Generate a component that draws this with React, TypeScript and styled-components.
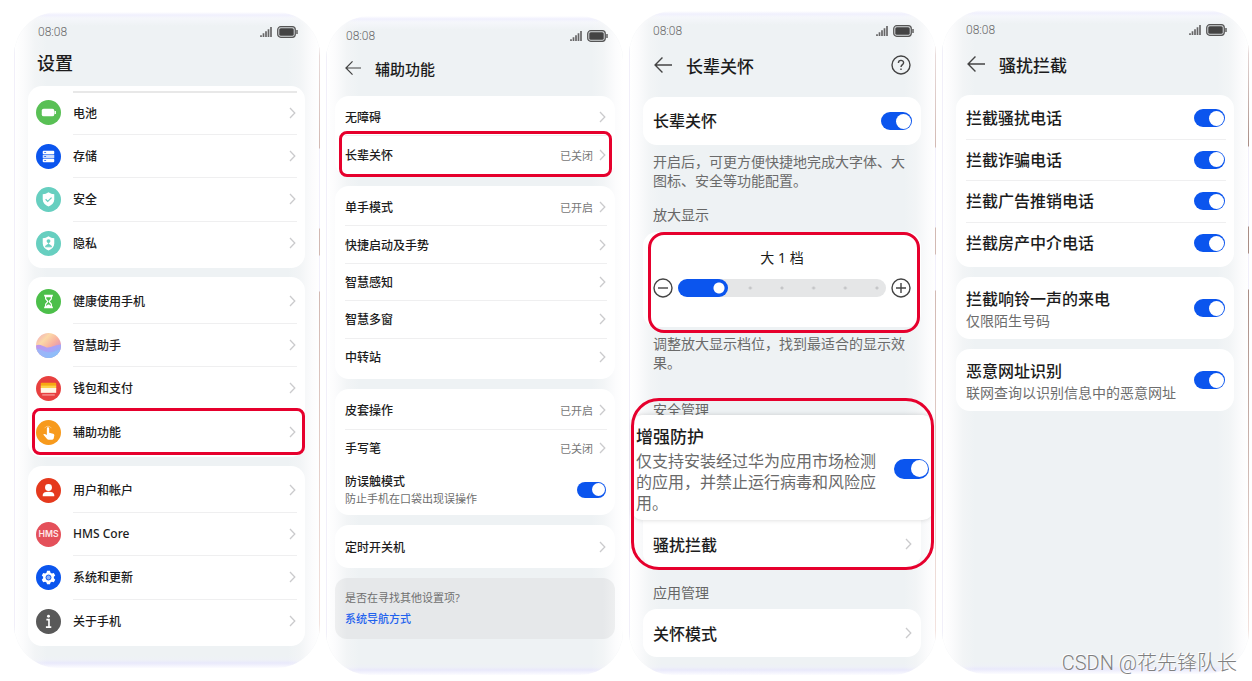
import React, { useState } from 'react';
import styled, { createGlobalStyle, css } from 'styled-components';

const BLUE = '#0b55ee';
const RED = '#e6002d';

const GlobalStyle = createGlobalStyle`
  *, *::before, *::after { box-sizing: border-box; }
  body {
    margin: 0;
    background: #fff;
    color: #1c1c1c;
    font-family: "Noto Sans", "Noto Sans CJK SC", sans-serif;
  }
  button {
    padding: 0;
    border: 0;
    background: none;
    color: inherit;
    font: inherit;
    text-align: left;
    cursor: pointer;
  }
  ul { margin: 0; padding: 0; list-style: none; }
  h1, h2, p { margin: 0; }
`;

const Page = styled.main`
  position: relative;
  display: grid;
  grid-template-columns: 306fr 297fr 307fr 307fr;
  gap: 6px;
  align-items: start;
  padding: 10px 3px 4px 14px;
`;

const Phone = styled.section<{
  $drop: number;
  $left: number;
  $right: number;
  $end: number;
  $keys?: string;
}>`
  position: relative;
  margin-top: ${(p) => p.$drop}px;
  padding: 10px ${(p) => p.$right}px ${(p) => p.$end}px ${(p) => p.$left}px;
  border-radius: 44px;
  overflow: hidden;
  background:
    linear-gradient(#fff 0, #f0f0fd 3px, rgba(246, 247, 252, 0.9) 6px, rgba(240, 243, 246, 0) 14px),
    linear-gradient(to top, #fcfcff 0, #e9e9fb 5px, rgba(238, 240, 248, 0.6) 8px, rgba(238, 242, 244, 0) 12px),
    #eef2f4;

  &::before {
    content: '';
    position: absolute;
    inset: 0;
    border-left: 1px solid #f1eff9;
    background: linear-gradient(
      to right,
      #fff 0,
      rgba(252, 252, 253, 0.95) 8px,
      rgba(246, 247, 248, 0.5) 20px,
      rgba(238, 242, 244, 0) 32px,
      rgba(238, 242, 244, 0) calc(100% - 32px),
      rgba(246, 247, 248, 0.5) calc(100% - 20px),
      rgba(252, 252, 253, 0.95) calc(100% - 8px),
      #fff 100%
    );
    pointer-events: none;
  }

  > * { position: relative; }

  ${(p) => p.$keys && css`
    &::after {
      content: '';
      position: absolute;
      top: 34px;
      right: 0;
      bottom: 34px;
      width: 1px;
      background: linear-gradient(
        #eadede 0,
        ${p.$keys} 102px,
        #f1effa 103px,
        #f1effa 182px,
        ${p.$keys} 183px,
        ${p.$keys} 209px,
        #f1effa 210px,
        #f1effa 245px,
        ${p.$keys} 246px,
        #f4e4e0 100%
      );
    }
  `}
`;

const Status = styled.div<{ $inset: number }>`
  display: flex;
  align-items: center;
  gap: 5px;
  height: 20px;
  padding: 0 7px 0 ${(p) => p.$inset}px;
  color: #4c4c4c;
`;

const Clock = styled.time`
  flex: 1;
  color: #6a6a6a;
  font: 300 12px/20px Roboto, sans-serif;
`;

const Header = styled.header<{ $height: number; $below: number; $inset: number }>`
  display: flex;
  align-items: center;
  gap: 14px;
  height: ${(p) => p.$height}px;
  padding: 0 10px ${(p) => p.$below}px ${(p) => p.$inset}px;
`;

const Title = styled.h1<{ $size: number }>`
  flex: 1;
  font-size: ${(p) => p.$size}px;
  font-weight: 500;
`;

const IconButton = styled.button`
  display: flex;
  flex: none;
  color: #444;
`;

const Stack = styled.div<{ $gap: number }>`
  display: flex;
  flex-direction: column;
  gap: ${(p) => p.$gap}px;
`;

const Card = styled.div`
  padding: 3px 0;
  border-radius: 14px;
  background: #fff;
`;

const List = styled.ul<{ $height: number; $lead?: boolean }>`
  display: grid;
  grid-auto-rows: 1fr;
  min-height: ${(p) => p.$height}px;
  ${(p) => p.$lead && css`
    margin-top: 2px;
    > li:first-child > * > :last-child { border-top: 2px solid #e8e8e8; }
  `}
  > li:not(:last-child) > * > :last-child { border-bottom: 1px solid #efeff0; }
`;

const outline = css<{ $inset: string; $radius: number }>`
  position: relative;
  &::after {
    content: '';
    position: absolute;
    z-index: 2;
    inset: ${(p) => p.$inset};
    border: 3px solid ${RED};
    border-radius: ${(p) => p.$radius}px;
    pointer-events: none;
  }
`;

const Item = styled.li``;
const MarkedItem = styled.li<{ $inset: string; $radius: number }>`${outline}`;

const rowBox = css<{ $tall?: number }>`
  display: flex;
  gap: 12px;
  width: 100%;
  height: 100%;
  min-height: ${(p) => p.$tall ?? 0}px;
  padding: 0 8px;
`;
const RowButton = styled.button`${rowBox}`;
const RowLabel = styled.label<{ $tall?: number }>`${rowBox}`;

const Badge = styled.svg`
  flex: none;
  align-self: center;
  width: 25px;
  height: 25px;
`;

const RowBody = styled.span<{ $indent?: number }>`
  display: flex;
  flex: 1;
  align-items: center;
  gap: 6px;
  min-width: 0;
  margin-left: ${(p) => p.$indent ?? 0}px;
  padding-right: 1px;
`;

const Name = styled.span<{ $size: number }>`
  display: block;
  flex: 1;
  font-size: ${(p) => p.$size}px;
  font-weight: 500;
`;

const Value = styled.span`
  color: #777;
  font-size: 11px;
`;

const Texts = styled.span`
  flex: 1;
  min-width: 0;
`;

const Sub = styled.span<{ $size: number }>`
  display: block;
  color: #6d6d6d;
  font-size: ${(p) => p.$size}px;
  line-height: ${(p) => p.$size + 5}px;
`;

const Head = styled.span<{ $size: number; $line: number }>`
  display: block;
  font-size: ${(p) => p.$size}px;
  line-height: ${(p) => p.$line}px;
  font-weight: 500;
`;

const Switch = styled.input<{ $w: number; $h: number }>`
  appearance: none;
  flex: none;
  display: flex;
  align-items: center;
  width: ${(p) => p.$w}px;
  height: ${(p) => p.$h}px;
  margin: 0;
  padding: 0 1px;
  border-radius: ${(p) => p.$h}px;
  background: #cfd2d6;
  cursor: pointer;
  &::before {
    content: '';
    width: ${(p) => p.$h - 3}px;
    height: ${(p) => p.$h - 3}px;
    border-radius: 50%;
    background: #fff;
  }
  &:checked { background: ${BLUE}; justify-content: flex-end; }
`;

const Finder = styled.aside`
  padding: 10px;
  border-radius: 12px;
  background: linear-gradient(to right, #eeeff0 0, #e6e8ea 12px, #e6e8ea calc(100% - 12px), #eeeff0 100%);
  color: #707070;
  font-size: 11px;
  line-height: 20px;
`;

const FinderLink = styled.a`
  display: block;
  margin-top: 1px;
  color: #1f62ee;
  font-weight: 500;
  text-decoration: none;
`;

const Note = styled.p<{ $height: number }>`
  height: ${(p) => p.$height}px;
  padding: 7px 10px 0;
  color: #6b6b6b;
  font-size: 14px;
  line-height: 19px;
`;

const SectionName = styled.h2<{ $height: number; $above?: number }>`
  height: ${(p) => p.$height}px;
  margin-top: ${(p) => p.$above ?? 0}px;
  padding: 0 10px;
  color: #666;
  font-size: 14px;
  font-weight: 400;
  line-height: 20px;
`;

const ZoomCard = styled.div<{ $inset: string; $radius: number }>`
  height: 95px;
  padding: 15px 10px;
  border-radius: 14px;
  background: #fff;
  ${outline}
`;

const ZoomLevel = styled.output`
  display: block;
  margin-bottom: 9px;
  font-size: 14px;
  line-height: 22px;
  text-align: center;
`;

const ZoomRow = styled.div`
  display: flex;
  align-items: center;
  gap: 5px;
`;

const Range = styled.input`
  appearance: none;
  flex: 1;
  min-width: 0;
  height: 18px;
  margin: 0;
  border-radius: 9px;
  background:
    linear-gradient(${BLUE}, ${BLUE}) 0 0 / var(--filled) 100% no-repeat,
    radial-gradient(circle at 2px 50%, #c4c5c7 1px, transparent 2px) 7px 0 / calc((100% - 18px) / 6) 100% repeat-x,
    #e5e6e7;
  &::-webkit-slider-thumb {
    appearance: none;
    width: 18px;
    height: 18px;
    border-radius: 50%;
    background: radial-gradient(circle, #fff 5px, ${BLUE} 6px);
  }
`;

const GuardGroup = styled.div<{ $inset: string; $radius: number }>`${outline}`;

const GuardPanel = styled.label`
  position: relative;
  display: flex;
  align-items: center;
  gap: 14px;
  min-height: 105px;
  margin: 0 -12px 0 -11px;
  padding: 2px 4px 0;
  border-radius: 10px;
  background: #fff;
  box-shadow: 0 0 5px rgba(0, 0, 0, 0.16);
`;

const GuardText = styled.span`
  display: block;
  max-width: 240px;
  color: #6a6a6a;
  font-size: 16px;
  line-height: 21px;
`;

const FlatCard = styled.div`
  height: 47px;
  border-radius: 0 0 14px 14px;
  background: #fff;
`;

const SoloCard = styled.div`
  height: 48px;
  border-radius: 14px;
  background: #fff;
`;

const Watermark = styled.p`
  position: absolute;
  right: 15px;
  bottom: 2px;
  color: #808080;
  font: 300 20px/28px Roboto, "Noto Sans CJK SC", sans-serif;
  text-shadow: -1px -1px 0 #fff;
`;

function Signal() {
  return (
    <svg width="12" height="12" viewBox="0 0 12 12" fill="none" stroke="#666" aria-hidden="true">
      <path d="M1 9.200V11M3.500 7.300V11M6 5.300V11M8.500 3.200V11M11 1V11" strokeWidth="1.700" />
    </svg>
  );
}

function Battery() {
  return (
    <svg width="21" height="12" viewBox="0 0 21 12" aria-hidden="true">
      <rect x=".7" y=".7" width="17.600" height="10.600" rx="3" fill="#d5d8da" stroke="#555" strokeWidth="1.200" />
      <rect x="2.300" y="2.300" width="14.400" height="7.400" rx="1.500" fill="#444" />
      <path d="M20 4v4" stroke="#555" strokeWidth="1.400" />
    </svg>
  );
}

function StatusBar({ inset }: { inset: number }) {
  return (
    <Status $inset={inset}>
      <Clock>08:08</Clock>
      <Signal />
      <Battery />
    </Status>
  );
}

function BackButton({ size }: { size: number }) {
  return (
    <IconButton aria-label="返回">
      <svg width={size} height={size} viewBox="0 0 17 17" fill="none" stroke="currentColor" strokeWidth="1.300">
        <path d="M8 1.500 1 8.500l7 7M1 8.500h16" />
      </svg>
    </IconButton>
  );
}

function Chevron() {
  return (
    <svg width="7" height="12" viewBox="0 0 7 12" fill="none" stroke="#cbcbcd" strokeWidth="1.300" aria-hidden="true">
      <path d="M1 1l4.800 5L1 11" />
    </svg>
  );
}

const badges: Record<string, React.ReactNode> = {
  battery: (
    <>
      <circle cx="13" cy="13" r="13" fill="#59c055" />
      <rect x="6" y="9" width="13" height="8" rx="2" fill="#fff" />
      <path d="M20 11.500v3" stroke="#fff" strokeWidth="1.500" />
    </>
  ),
  storage: (
    <>
      <circle cx="13" cy="13" r="13" fill="#0b55ee" />
      <rect x="7" y="7" width="12" height="3.600" rx="1" fill="#fff" />
      <rect x="7" y="11.200" width="12" height="3.600" fill="#cfdefc" />
      <rect x="7" y="15.400" width="12" height="3.600" rx="1" fill="#fff" />
      <path d="M8.500 8.800h2M8.500 13h2M8.500 17.200h2" stroke="#0b55ee" strokeWidth=".8" />
    </>
  ),
  security: (
    <>
      <circle cx="13" cy="13" r="13" fill="#67cfc0" />
      <path d="M13 5.500c2 1.400 3.600 1.900 6 2.100V13c0 3.500-2.500 5.900-6 7.200C9.500 18.900 7 16.500 7 13V7.600c2.400-.2 4-.7 6-2.100z" fill="#fff" />
      <path d="M10 12.800l2.200 2.200 4-4" fill="none" stroke="#67cfc0" strokeWidth="1.300" />
    </>
  ),
  privacy: (
    <>
      <circle cx="13" cy="13" r="13" fill="#67cfc0" />
      <path d="M13 5.500c2 1.400 3.600 1.900 6 2.100V13c0 3.500-2.500 5.900-6 7.200C9.500 18.900 7 16.500 7 13V7.600c2.400-.2 4-.7 6-2.100z" fill="#fff" />
      <circle cx="13" cy="10.500" r="2" fill="#67cfc0" />
      <path d="M13 12v3M9.800 16.500c.5-1.800 1.700-2.400 3.200-2.400s2.700.6 3.200 2.400z" fill="#67cfc0" stroke="#67cfc0" strokeWidth=".8" />
    </>
  ),
  health: (
    <>
      <circle cx="13" cy="13" r="13" fill="#4cbf4a" />
      <path d="M8.500 7h9M8.500 19h9" stroke="#fff" strokeWidth="1.800" />
      <path d="M10 8v1.500c0 2 2.200 2.300 2.200 3.500s-2.200 1.500-2.200 3.500V18h6v-1.500c0-2-2.200-2.300-2.200-3.500s2.200-1.500 2.200-3.500V8z" fill="none" stroke="#fff" strokeWidth="1.300" />
      <path d="M11 18c.3-1.500 1-2 2-2s1.700.5 2 2z" fill="#fff" />
    </>
  ),
  assistant: (
    <>
      <defs>
        <linearGradient id="dawn" x1="0" y1="0" x2="1" y2="1">
          <stop offset="0" stopColor="#f0a5c0" />
          <stop offset=".3" stopColor="#fbd9a8" />
          <stop offset=".55" stopColor="#f8b0a0" />
          <stop offset="1" stopColor="#b878e0" />
        </linearGradient>
        <linearGradient id="sea" x1="0" y1="0" x2="1" y2="1">
          <stop offset="0" stopColor="#c493ea" />
          <stop offset=".5" stopColor="#a9a4f8" />
          <stop offset="1" stopColor="#6fc4f5" />
        </linearGradient>
        <clipPath id="orb"><circle cx="13" cy="13" r="13" /></clipPath>
      </defs>
      <g clipPath="url(#orb)">
        <rect width="26" height="26" fill="url(#dawn)" />
        <path d="M0 13c4-2 7 1 11 2s9-3 15-3v14H0z" fill="url(#sea)" />
        <path d="M0 16c6 0 9 5 17 4l9-3v9H0z" fill="#8fc3fa" opacity=".6" />
      </g>
    </>
  ),
  wallet: (
    <>
      <circle cx="13" cy="13" r="13" fill="#e8403f" />
      <rect x="5" y="7" width="16" height="5" rx="1" fill="#f7a813" />
      <rect x="5" y="10" width="16" height="4" fill="#fcd34a" />
      <rect x="5" y="12.500" width="16" height="5" fill="#fff6e6" />
      <path d="M6.500 19.700h13" stroke="#f7a09c" strokeWidth="1.300" />
    </>
  ),
  access: (
    <>
      <circle cx="13" cy="13" r="13" fill="#f79a1c" />
      <path d="M9 8.500a4 4 0 0 1 7 0" fill="none" stroke="#fbc67d" strokeWidth="1" />
      <path d="M11.300 8.800c0-1.600 2.400-1.600 2.400 0v4.400l4 1c1 .3 1.500.9 1.300 1.900l-.6 3.200c-.2.800-.7 1.200-1.500 1.200h-3.800c-.7 0-1.200-.3-1.600-.8l-4-4.500c.6-1 1.800-1 3.800.4z" fill="#fff" />
    </>
  ),
  user: (
    <>
      <circle cx="13" cy="13" r="13" fill="#e5391d" />
      <circle cx="13" cy="9.800" r="3.600" fill="#fff" />
      <path d="M7 19v-1.200c0-2.400 2-3.600 6-3.600s6 1.200 6 3.600V19z" fill="#fff" />
    </>
  ),
  hms: (
    <>
      <circle cx="13" cy="13" r="13" fill="#e4505a" />
      <text x="13" y="16" textAnchor="middle" fill="#ffe9e9" fontFamily="Inter, sans-serif" fontWeight="600" fontSize="9">HMS</text>
    </>
  ),
  system: (
    <>
      <circle cx="13" cy="13" r="13" fill="#0b55ee" />
      <path d="M11.500 6h3l.6 2 1.400.8 2-.6 1.500 2.600-1.400 1.500v1.500l1.400 1.500-1.500 2.600-2-.6-1.400.8-.6 2h-3l-.6-2-1.400-.8-2 .6L6 15.300l1.400-1.500v-1.500L6 10.800l1.500-2.600 2 .6 1.400-.8z" fill="#fff" />
      <circle cx="13" cy="13" r="2.600" fill="#8fb2f8" stroke="#0b55ee" strokeWidth="1" />
    </>
  ),
  about: (
    <>
      <circle cx="13" cy="13" r="13" fill="#595959" />
      <circle cx="13" cy="7.500" r="1.500" fill="#fff" />
      <path d="M10.800 11h2.700v7.500M10.300 18.800h5.600" fill="none" stroke="#fff" strokeWidth="1.700" />
    </>
  ),
};

type Entry = { icon: string; name: string; marked?: boolean };

const settings: Entry[][] = [
  [
    { icon: 'battery', name: '电池' },
    { icon: 'storage', name: '存储' },
    { icon: 'security', name: '安全' },
    { icon: 'privacy', name: '隐私' },
  ],
  [
    { icon: 'health', name: '健康使用手机' },
    { icon: 'assistant', name: '智慧助手' },
    { icon: 'wallet', name: '钱包和支付' },
    { icon: 'access', name: '辅助功能', marked: true },
  ],
  [
    { icon: 'user', name: '用户和帐户' },
    { icon: 'hms', name: 'HMS Core' },
    { icon: 'system', name: '系统和更新' },
    { icon: 'about', name: '关于手机' },
  ],
];

function SettingRow({ icon, name }: Entry) {
  return (
    <RowButton>
      <Badge viewBox="0 0 26 26" aria-hidden="true">{badges[icon]}</Badge>
      <RowBody>
        <Name $size={12}>{name}</Name>
        <Chevron />
      </RowBody>
    </RowButton>
  );
}

function LinkRow({ name, value, size = 12 }: { name: string; value?: string; size?: number }) {
  return (
    <RowButton>
      <RowBody $indent={2}>
        <Name $size={size}>{name}</Name>
        {value && <Value>{value}</Value>}
        <Chevron />
      </RowBody>
    </RowButton>
  );
}

function SwitchRow({ name, note, tall }: { name: string; note?: string; tall?: number }) {
  return (
    <RowLabel $tall={tall}>
      <RowBody $indent={2}>
        <Texts>
          <Head $size={16} $line={24}>{name}</Head>
          {note && <Sub $size={14}>{note}</Sub>}
        </Texts>
        <Switch type="checkbox" defaultChecked $w={31} $h={18} />
      </RowBody>
    </RowLabel>
  );
}

function SettingsPhone() {
  return (
    <Phone $drop={2} $left={14} $right={15} $end={22} $keys="#d2b9b3">
      <StatusBar inset={10} />
      <Header $height={44} $below={4} $inset={9}>
        <Title $size={18}>设置</Title>
      </Header>
      <Stack $gap={9}>
        {settings.map((group, i) => (
          <Card key={i}>
            <List $height={174} $lead={i === 0}>
              {group.map((e) =>
                e.marked ? (
                  <MarkedItem key={e.name} $inset="-3px 0 -1px 4px" $radius={8}><SettingRow {...e} /></MarkedItem>
                ) : (
                  <Item key={e.name}><SettingRow {...e} /></Item>
                ),
              )}
            </List>
          </Card>
        ))}
      </Stack>
    </Phone>
  );
}

function AccessibilityPhone() {
  return (
    <Phone $drop={6} $left={9} $right={8} $end={36}>
      <StatusBar inset={11} />
      <Header $height={50} $below={6} $inset={10}>
        <BackButton size={16} />
        <Title $size={15}>辅助功能</Title>
      </Header>
      <Stack $gap={10}>
        <Card>
          <List $height={74}>
            <Item><LinkRow name="无障碍" /></Item>
            <MarkedItem $inset="-5px 3px -4px 4px" $radius={8}><LinkRow name="长辈关怀" value="已关闭" /></MarkedItem>
          </List>
        </Card>
        <Card>
          <List $height={187}>
            <Item><LinkRow name="单手模式" value="已开启" /></Item>
            <Item><LinkRow name="快捷启动及手势" /></Item>
            <Item><LinkRow name="智慧感知" /></Item>
            <Item><LinkRow name="智慧多窗" /></Item>
            <Item><LinkRow name="中转站" /></Item>
          </List>
        </Card>
        <Card>
          <List $height={75}>
            <Item><LinkRow name="皮套操作" value="已开启" /></Item>
            <Item><LinkRow name="手写笔" value="已关闭" /></Item>
          </List>
          <RowLabel $tall={45}>
            <RowBody $indent={2}>
              <Texts>
                <Head $size={12} $line={18}>防误触模式</Head>
                <Sub $size={11}>防止手机在口袋出现误操作</Sub>
              </Texts>
              <Switch type="checkbox" defaultChecked $w={29} $h={16} />
            </RowBody>
          </RowLabel>
        </Card>
        <Card>
          <List $height={37}>
            <Item><LinkRow name="定时开关机" /></Item>
          </List>
        </Card>
        <Finder>
          是否在寻找其他设置项?
          <FinderLink href="#navigation">系统导航方式</FinderLink>
        </Finder>
      </Stack>
    </Phone>
  );
}

function ElderCarePhone() {
  const [level, setLevel] = useState(1);
  return (
    <Phone $drop={1} $left={14} $right={15} $end={18} $keys="#d2b9b3">
      <StatusBar inset={10} />
      <Header $height={56} $below={8} $inset={11}>
        <BackButton size={18} />
        <Title $size={17}>长辈关怀</Title>
        <IconButton aria-label="帮助">
          <svg width="20" height="20" viewBox="0 0 20 20" fill="none" stroke="currentColor" strokeWidth="1.400">
            <circle cx="10" cy="10" r="9" />
            <path d="M7.400 8c0-3.600 5.200-3.400 5.200-.3 0 1.900-2.600 2-2.600 4.300M10 13.600v1.500" />
          </svg>
        </IconButton>
      </Header>
      <SoloCard><SwitchRow name="长辈关怀" /></SoloCard>
      <Note $height={60}>开启后，可更方便快捷地完成大字体、大图标、安全等功能配置。</Note>
      <SectionName $height={27}>放大显示</SectionName>
      <ZoomCard $inset="0 1px -6px 5px" $radius={16}>
        <ZoomLevel>大 {level} 档</ZoomLevel>
        <ZoomRow>
          <IconButton aria-label="缩小" onClick={() => setLevel(Math.max(0, level - 1))}>
            <svg width="20" height="20" viewBox="0 0 20 20" fill="none" stroke="currentColor" strokeWidth="1.400">
              <circle cx="10" cy="10" r="9" />
              <path d="M5 10h10" />
            </svg>
          </IconButton>
          <Range
            type="range"
            aria-label="放大显示"
            min={0}
            max={6}
            value={level}
            onChange={(e) => setLevel(Number(e.target.value))}
            style={{ '--filled': `calc(9px + (100% - 18px) * ${level} / 6)` } as React.CSSProperties}
          />
          <IconButton aria-label="放大" onClick={() => setLevel(Math.min(6, level + 1))}>
            <svg width="20" height="20" viewBox="0 0 20 20" fill="none" stroke="currentColor" strokeWidth="1.400">
              <circle cx="10" cy="10" r="9" />
              <path d="M5 10h10M10 5v10" />
            </svg>
          </IconButton>
        </ZoomRow>
      </ZoomCard>
      <Note $height={73}>调整放大显示档位，找到最适合的显示效果。</Note>
      <GuardGroup $inset="-2px -13px -3px -12px" $radius={28}>
        <SectionName $height={15}>安全管理</SectionName>
        <GuardPanel>
          <Texts>
            <Head $size={17} $line={28}>增强防护</Head>
            <GuardText>仅支持安装经过华为应用市场检测的应用，并禁止运行病毒和风险应用。</GuardText>
          </Texts>
          <Switch type="checkbox" defaultChecked $w={35} $h={20} />
        </GuardPanel>
        <FlatCard><LinkRow name="骚扰拦截" size={16} /></FlatCard>
      </GuardGroup>
      <SectionName $height={26} $above={16}>应用管理</SectionName>
      <SoloCard><LinkRow name="关怀模式" size={16} /></SoloCard>
    </Phone>
  );
}

function BlockingPhone() {
  return (
    <Phone $drop={0} $left={14} $right={15} $end={263} $keys="#a98d86">
      <StatusBar inset={10} />
      <Header $height={55} $below={7} $inset={11}>
        <BackButton size={18} />
        <Title $size={17}>骚扰拦截</Title>
      </Header>
      <Stack $gap={10}>
        <Card>
          <List $height={166}>
            {['拦截骚扰电话', '拦截诈骗电话', '拦截广告推销电话', '拦截房产中介电话'].map((name) => (
              <Item key={name}><SwitchRow name={name} /></Item>
            ))}
          </List>
        </Card>
        <Card><SwitchRow name="拦截响铃一声的来电" note="仅限陌生号码" tall={56} /></Card>
        <Card><SwitchRow name="恶意网址识别" note="联网查询以识别信息中的恶意网址" tall={56} /></Card>
      </Stack>
    </Phone>
  );
}

export default function App() {
  return (
    <>
      <GlobalStyle />
      <Page>
        <SettingsPhone />
        <AccessibilityPhone />
        <ElderCarePhone />
        <BlockingPhone />
        <Watermark>CSDN @花先锋队长</Watermark>
      </Page>
    </>
  );
}
